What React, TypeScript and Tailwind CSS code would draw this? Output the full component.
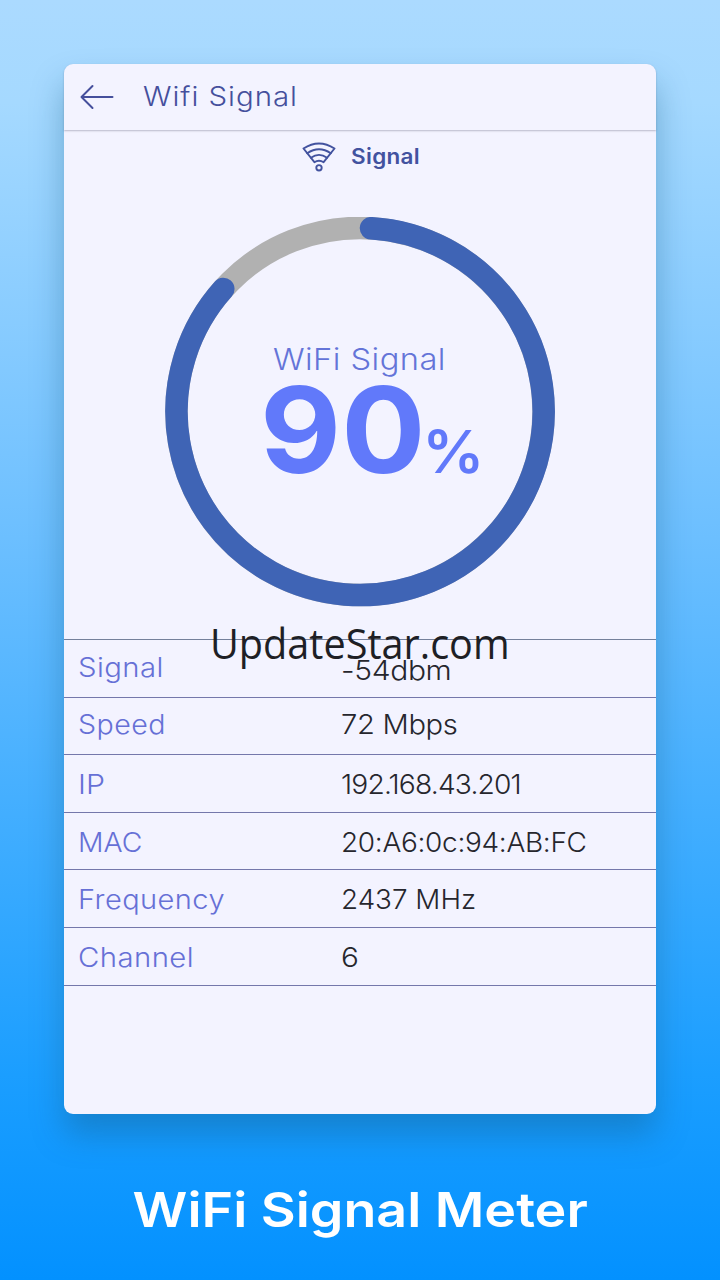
import clsx from "clsx";

const rows = [
  { label: "Signal", value: "-54dbm", labelClass: "tracking-[0.4px] scale-x-[1.085]", valueClass: "tracking-[-0.3px] scale-x-[1.11] translate-y-[3px]" },
  { label: "Speed", value: "72 Mbps", labelClass: "tracking-[0.4px] scale-x-[1.06] -translate-y-[1px]", valueClass: "tracking-[-0.3px] scale-x-[1.08] -translate-y-[1px]" },
  { label: "IP", value: "192.168.43.201", labelClass: "scale-x-[1.12] translate-y-[2px]", valueClass: "tracking-[-0.8px] scale-x-[1.045] translate-y-[2px]" },
  { label: "MAC", value: "20:A6:0c:94:AB:FC", labelClass: "scale-x-[1.05] translate-y-[2px]", valueClass: "tracking-[-0.3px] scale-x-[1.037] translate-y-[2px]" },
  { label: "Frequency", value: "2437 MHz", labelClass: "tracking-[0.4px] scale-x-[1.075] translate-y-[2px]", valueClass: "scale-x-[1.03] translate-y-[2px]" },
  { label: "Channel", value: "6", labelClass: "tracking-[0.4px] scale-x-[1.085] translate-y-[2px]", valueClass: "scale-x-[1.1] translate-y-[2px]" },
];

const BackIcon = () => (
  <svg width="34" height="26" viewBox="0 0 34 26" fill="none" stroke="#454f9c" strokeWidth="2" strokeLinecap="round" strokeLinejoin="round">
    <path d="M12.5 2 1.5 13l11 11M1.5 13H32.5" />
  </svg>
);

const WifiIcon = () => (
  <svg width="34" height="30" viewBox="0 0 34 30" fill="none" stroke="#42529f" strokeWidth="1.9" strokeLinecap="round" strokeLinejoin="round">
    <path d="M1.5 6.5Q17 -3.5 32.5 6.5L21.6 20.2Q17 17.2 12.4 20.2Z" />
    <path d="M5.2 11.2Q17 3.2 28.8 11.2M8.9 15.8Q17 10 25.1 15.8" />
    <circle cx="17" cy="25.8" r="2.7" />
  </svg>
);

const SignalRing = () => (
  <div className="relative h-[390px] w-[390px]">
    <svg width="390" height="390" viewBox="0 0 390 390" fill="none" strokeWidth="22.5">
      <circle cx="195" cy="194.5" r="183.6" stroke="#b1b1b1" />
      <path d="M206 11.2A183.6 183.6 0 1 1 58.3 72" stroke="#3f64b5" strokeLinecap="round" />
    </svg>
    <div className="absolute inset-0">
      <p className="absolute left-[108px] top-[124px] origin-left scale-x-[1.09] whitespace-nowrap text-[30px] font-light leading-9 tracking-[0.4px] text-[#6474d8]">
        WiFi Signal
      </p>
      <div className="absolute left-[95px] top-[153px] flex origin-left scale-x-[1.05] items-baseline whitespace-nowrap font-bold text-[#6179fa]">
        <span className="text-[119px] leading-[120px]">90</span>
        <span className="-ml-[3px] text-[59px] font-semibold leading-none">%</span>
      </div>
    </div>
  </div>
);

export default function App() {
  return (
    <div className="flex h-[1280px] w-[720px] flex-col items-center overflow-hidden bg-[linear-gradient(180deg,#abdaff_0%,#a5d9ff_8%,#6cbfff_42%,#1b9eff_84%,#0391ff_100%)] pt-16 font-['Inter',sans-serif]">
      <div className="relative flex h-[1050px] w-[592px] flex-col rounded-[9px] bg-[#f3f3ff] shadow-[0_20px_32px_rgba(22,90,130,0.38)]">
        <header className="flex h-[66px] shrink-0 items-center rounded-t-[9px] pl-4 shadow-[0_1px_2px_rgba(60,60,90,0.32)]">
          <BackIcon />
          <h1 className="ml-[29px] origin-left scale-x-[1.09] text-[27px] font-light tracking-[0.9px] text-[#454f9c]">Wifi Signal</h1>
        </header>

        <div className="flex h-[54px] shrink-0 items-center pl-[238px]">
          <WifiIcon />
          <span className="ml-[15px] origin-left scale-x-[1.07] text-[21px] font-semibold tracking-[0.3px] text-[#42529f]">Signal</span>
        </div>

        <div className="flex h-[455px] shrink-0 justify-center pt-[33px]">
          <SignalRing />
        </div>

        <dl className="border-t border-[#74809b] text-[27px] font-light">
          {rows.map((row) => (
            <div key={row.label} className="flex h-[57.6px] items-center border-b border-[#7477ab]">
              <dt className={clsx("ml-[14px] w-[263px] origin-left text-[#6670d6]", row.labelClass)}>{row.label}</dt>
              <dd className={clsx("origin-left whitespace-nowrap text-[#26262d]", row.valueClass)}>{row.value}</dd>
            </div>
          ))}
        </dl>

        <div className="absolute left-[146px] top-[550px] origin-left scale-x-[0.943] whitespace-nowrap font-['Open_Sans',sans-serif] text-[42px] leading-[57px] text-[#1e1f25]">
          UpdateStar.com
        </div>
      </div>

      <h2 className="mt-[66px] scale-x-[1.12] whitespace-nowrap text-[48px] font-semibold leading-[60px] text-white">WiFi Signal Meter</h2>
    </div>
  );
}
